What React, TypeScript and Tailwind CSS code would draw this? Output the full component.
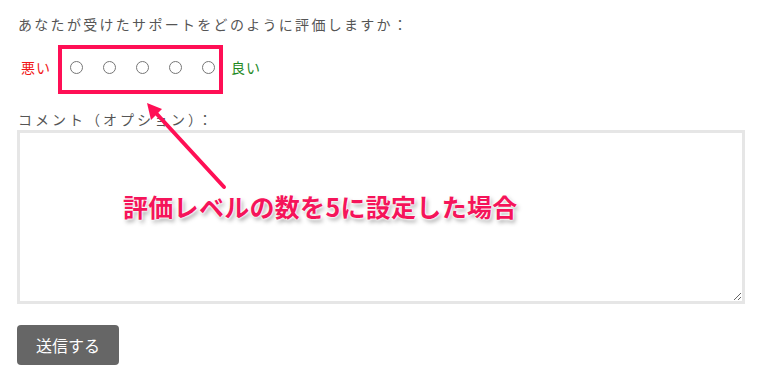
import React from 'react';

const App = () => {
  const levels = [1, 2, 3, 4, 5];

  return (
    <div
      className="relative h-[376px] w-[764px] overflow-hidden bg-white text-[#555] [font-family:'Noto_Sans_CJK_JP','Noto_Sans',sans-serif]"
    >
      <div className="flex flex-col px-[17px] pt-[12px]">
        {/* question */}
        <p className="pl-[1px] text-[14px] leading-[24px] tracking-[2.3px]">あなたが受けたサポートをどのように評価しますか：</p>

        {/* rating row */}
        <div className="mt-[20px] flex h-[22px] items-center text-[14px]">
          <span className="ml-[4px] tracking-[1px] text-[#f21818]">悪い</span>
          <div className="ml-[19px] flex items-center gap-[20px]">
            {levels.map((n) => (
              <input key={n} type="radio" name="rating" className="m-0 h-[13px] w-[13px]" />
            ))}
          </div>
          <span className="ml-[16px] tracking-[1px] text-[#1f8a1f]">良い</span>
        </div>

        {/* comment */}
        <label className="mt-[31px] pl-[1px] text-[14px] leading-[20px] tracking-[3px]">コメント（オプション）：</label>
        <textarea className="mt-[1px] h-[174px] w-[728px] resize-y border-[3px] border-[#e6e6e6] bg-white" />

        <button className="mt-[21px] h-[40px] w-[102px] rounded-[4px] bg-[#666] text-[16px] text-white">送信する</button>
      </div>

      {/* annotation: box around the radios */}
      <div className="absolute left-[58px] top-[45px] h-[49px] w-[165px] border-[4px] border-[#ff0f55]" />

      {/* annotation: arrow */}
      <svg className="absolute left-0 top-0" width="764" height="376" viewBox="0 0 764 376">
        <line x1="224" y1="187" x2="155" y2="112" stroke="#ff0f55" strokeWidth="4" strokeLinecap="round" />
        <polygon points="147,103 162,109 151,120" fill="#ff0f55" />
      </svg>

      {/* annotation: caption */}
      <div className="absolute left-[123px] top-[190px] text-[25px] font-bold leading-[32px] tracking-[0.3px] text-[#f5145a] [text-shadow:0_0_2px_#fff,0_0_2px_#fff,0_0_3px_#fff,2px_3px_4px_rgba(0,0,0,0.35)]">
        評価レベルの数を5に設定した場合
      </div>
    </div>
  );
};

export default App;
